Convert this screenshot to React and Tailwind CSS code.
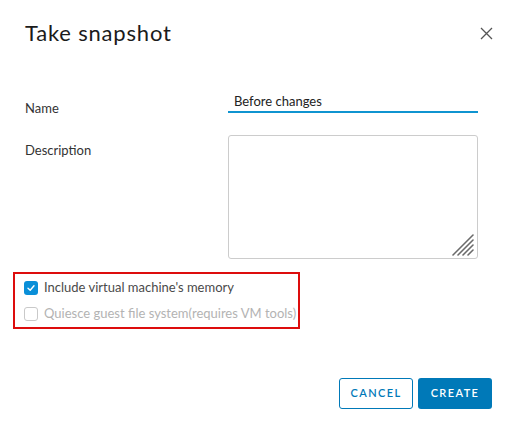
import React from 'react';

function ResizeGrip() {
  return (
    <svg className="absolute right-[3px] bottom-[2px]" width="22" height="22" viewBox="0 0 22 22">
      <g stroke="#6b6b6b" strokeWidth="1.6" strokeLinecap="round">
        <line x1="1" y1="21" x2="21" y2="1" />
        <line x1="6" y1="21" x2="21" y2="6" />
        <line x1="11" y1="21" x2="21" y2="11" />
        <line x1="16" y1="21" x2="21" y2="16" />
      </g>
    </svg>
  );
}

function Checkbox({ checked, disabled, label }) {
  return (
    <label className="flex items-center h-[26px]">
      {checked ? (
        <span className="flex items-center justify-center w-[14px] h-[14px] rounded-[3px] bg-[#0a8fd8]">
          <svg width="10" height="10" viewBox="0 0 10 10">
            <path d="M2 5.2 L4.2 7.2 L8 2.8" fill="none" stroke="#fff" strokeWidth="1.4" strokeLinecap="round" strokeLinejoin="round" />
          </svg>
        </span>
      ) : (
        <span className="w-[14px] h-[14px] rounded-[3px] border border-[#c9c9c9] bg-white" />
      )}
      <span className={'ml-[6px] text-[13px] whitespace-nowrap ' + (disabled ? 'text-[#b3b3b3]' : 'text-[#4a4a4a]')}>{label}</span>
    </label>
  );
}

export default function App() {
  return (
    <div className="w-[513px] h-[431px] bg-white flex flex-col font-['Lato',sans-serif] text-[#333]">
      {/* Header */}
      <div className="flex items-center justify-between pl-[25px] pr-[20px] pt-[18px]">
        <h1 className="text-[22px] leading-[30px] text-[#1b1b1b] font-normal tracking-[0.8px]">Take snapshot</h1>
        <button className="w-[14px] h-[14px] flex items-center justify-center">
          <svg width="13" height="13" viewBox="0 0 13 13">
            <path d="M1 1 L12 12 M12 1 L1 12" stroke="#555" strokeWidth="1.3" />
          </svg>
        </button>
      </div>

      {/* Form */}
      <div className="pl-[25px] pr-[35px] mt-[44px] flex flex-col">
        <div className="flex items-end">
          <div className="w-[203px] text-[13px] text-[#333] leading-[18px] mb-[-4px]">Name</div>
          <div className="flex-1 border-b-2 border-[#0f94d0] pl-[6px] pb-[1px] text-[13px] leading-[18px] text-[#222]">
            Before changes
          </div>
        </div>
        <div className="flex mt-[22px]">
          <div className="w-[203px] text-[13px] text-[#333] leading-[18px] mt-[6px]">Description</div>
          <div className="relative flex-1 h-[124px] border border-[#cccccc] rounded-[3px]">
            <ResizeGrip />
          </div>
        </div>
      </div>

      {/* Options */}
      <div className="ml-[13px] mt-[13px] w-[287px] h-[57px] border-2 border-[#dd0d0d] pl-[9px] pt-[1px] flex flex-col">
        <Checkbox checked label="Include virtual machine's memory" />
        <Checkbox disabled label="Quiesce guest file system(requires VM tools)" />
      </div>

      {/* Footer */}
      <div className="flex justify-end gap-[5px] pr-[21px] mt-[49px]">
        <button className="w-[74px] h-[31px] border border-[#0079b8] rounded-[3px] text-[#0079b8] text-[11px] font-semibold tracking-[1.4px]">
          CANCEL
        </button>
        <button className="w-[74px] h-[31px] bg-[#0079b8] rounded-[3px] text-white text-[11px] font-semibold tracking-[1.4px]">
          CREATE
        </button>
      </div>
    </div>
  );
}
